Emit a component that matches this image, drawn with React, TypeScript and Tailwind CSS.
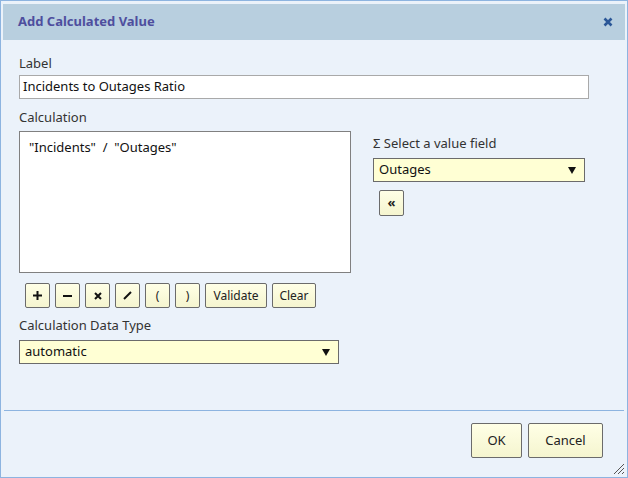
import React from 'react'

const font = { fontFamily: '"Segoe UI", "Noto Sans", "Open Sans", sans-serif' }

function SmallButton({ children, className = '' }: { children: React.ReactNode; className?: string }) {
  return (
    <button
      className={`flex h-[25px] items-center justify-center rounded-[2px] border border-[#6b6b6b] bg-gradient-to-b from-[#ffffe6] to-[#f5f5cf] text-[12px] text-[#222] ${className}`}
    >
      {children}
    </button>
  )
}

function Arrow() {
  return (
    <svg width="8" height="7" viewBox="0 0 8 7" className="shrink-0">
      <path d="M0 0h8L4 7z" fill="#111" />
    </svg>
  )
}

export default function App() {
  return (
    <div
      className="relative flex h-[478px] w-[628px] flex-col border border-[#8db4e0] bg-[#ebf2fa] text-[#333]"
      style={font}
    >
      {/* title bar */}
      <div className="mx-[2px] mt-[3px] flex h-[36px] items-center justify-between bg-[#b8cfdf] pl-[15px] pr-[12px]">
        <span className="text-[13px] font-bold text-[#4e4e9e]">Add Calculated Value</span>
        <svg width="10" height="10" viewBox="0 0 10 10">
          <path d="M1.5 1.5l7 7M8.5 1.5l-7 7" stroke="#2b5797" strokeWidth="2.6" />
        </svg>
      </div>

      <div className="flex flex-1 flex-col px-[18px] pt-[14px]">
        <div className="text-[13px] leading-[18px]">Label</div>
        <div className="mt-[3px] flex h-[24px] w-[570px] items-center border border-[#a9a9a9] bg-white px-[3px] text-[13px] text-[#111]">
          Incidents to Outages Ratio
        </div>

        <div className="mt-[9px] flex">
          <div className="flex w-[332px] flex-col">
            <div className="text-[13px] leading-[18px]">Calculation</div>
            <div className="mt-[5px] h-[142px] w-[332px] whitespace-pre border border-[#808080] bg-white px-[9px] pt-[6px] text-[13px] text-[#111]">
              {'"Incidents"  /  "Outages"'}
            </div>
            <div className="mt-[10px] flex gap-[5px] pl-[6px]">
              <SmallButton className="w-[25px]">
                <svg width="9" height="9" viewBox="0 0 9 9">
                  <path d="M4.5 0v9M0 4.5h9" stroke="#111" strokeWidth="2" />
                </svg>
              </SmallButton>
              <SmallButton className="w-[25px]">
                <svg width="9" height="9" viewBox="0 0 9 9">
                  <path d="M0 5h9" stroke="#111" strokeWidth="2" />
                </svg>
              </SmallButton>
              <SmallButton className="w-[25px]">
                <svg width="8" height="8" viewBox="0 0 8 8">
                  <path d="M1 1l6 6M7 1L1 7" stroke="#111" strokeWidth="2" />
                </svg>
              </SmallButton>
              <SmallButton className="w-[25px]">
                <svg width="9" height="9" viewBox="0 0 9 9">
                  <path d="M8 1L1 8" stroke="#111" strokeWidth="2" />
                </svg>
              </SmallButton>
              <SmallButton className="w-[25px]">(</SmallButton>
              <SmallButton className="w-[25px]">)</SmallButton>
              <SmallButton className="w-[62px]">Validate</SmallButton>
              <SmallButton className="w-[44px]">Clear</SmallButton>
            </div>
            <div className="mt-[8px] text-[13px] leading-[18px]">Calculation Data Type</div>
            <div className="mt-[6px] flex h-[24px] w-[320px] items-center justify-between border border-[#6b6b6b] bg-[#ffffd4] pl-[5px] pr-[8px] text-[13px] text-[#111]">
              <span>automatic</span>
              <Arrow />
            </div>
          </div>

          <div className="ml-[22px] flex flex-col pt-[26px]">
            <div className="text-[13px] leading-[18px]">Σ Select a value field</div>
            <div className="mt-[6px] flex h-[24px] w-[212px] items-center justify-between border border-[#6b6b6b] bg-[#ffffd4] pl-[5px] pr-[8px] text-[13px] text-[#111]">
              <span>Outages</span>
              <Arrow />
            </div>
            <div className="ml-[6px] mt-[8px]">
              <SmallButton className="h-[26px] w-[25px] text-[13px] font-bold">«</SmallButton>
            </div>
          </div>
        </div>
      </div>

      <div className="mx-[3px] h-px bg-[#8db4e0]" />
      <div className="flex h-[66px] items-start justify-end gap-[6px] pr-[24px] pt-[12px]">
        <SmallButton className="h-[35px] w-[51px] text-[13px]">OK</SmallButton>
        <SmallButton className="h-[35px] w-[75px] text-[13px]">Cancel</SmallButton>
      </div>

      <svg width="12" height="12" viewBox="0 0 12 12" className="absolute bottom-[2px] right-[2px]">
        <path d="M11 1L1 11M11 5L5 11M11 9L9 11" stroke="#555" strokeWidth="1" />
      </svg>
    </div>
  )
}
